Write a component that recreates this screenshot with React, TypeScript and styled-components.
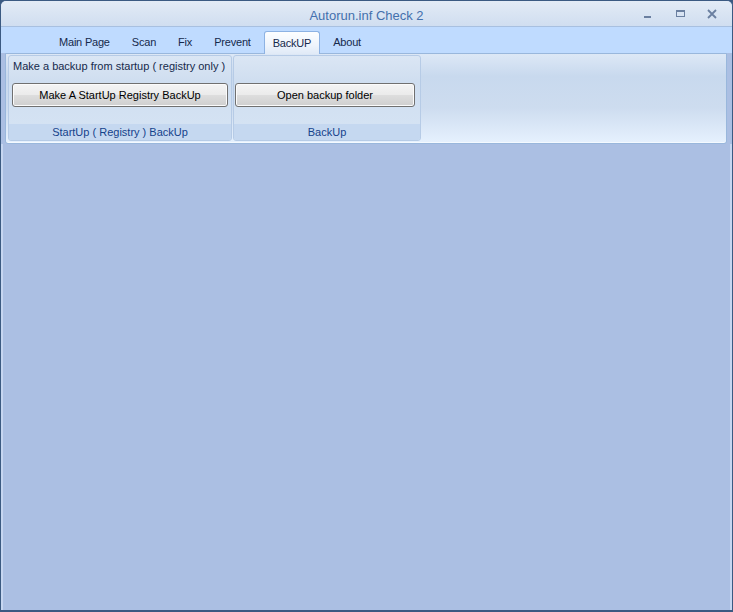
import React from 'react'
import styled, { createGlobalStyle } from 'styled-components'

const GlobalStyle = createGlobalStyle`
  html, body {
    margin: 0;
    padding: 0;
    height: 100%;
    background: #3b5a82;
  }
  #root {
    height: 100%;
  }
`

const uiFont = `'Liberation Sans', 'DejaVu Sans', sans-serif`

const Window = styled.div`
  box-sizing: border-box;
  width: 733px;
  height: 612px;
  display: flex;
  flex-direction: column;
  background: #abbfe3;
  border: 1px solid #3b5a82;
  border-bottom-width: 2px;
  border-radius: 6px 6px 0 0;
  overflow: hidden;
  font-family: ${uiFont};
  font-size: 11px;
`

const TitleBar = styled.div`
  position: relative;
  height: 25px;
  flex: none;
  display: flex;
  align-items: center;
  justify-content: center;
  background: linear-gradient(#e3ebf6 0%, #dae5f3 45%, #d0def0 100%);
  border-bottom: 1px solid #a8c0e0;
`

const Title = styled.span`
  font-size: 13px;
  color: #4470ad;
  margin-top: 3px;
`

const Controls = styled.div`
  position: absolute;
  right: 8px;
  top: 0;
  height: 100%;
  display: flex;
  align-items: center;
  gap: 8px;
`

const ControlButton = styled.div`
  width: 24px;
  height: 18px;
  display: flex;
  align-items: center;
  justify-content: center;
`

const TabStrip = styled.div`
  height: 26px;
  flex: none;
  display: flex;
  align-items: flex-end;
  padding-left: 49px;
  background: #bfdbff;
`

const Tab = styled.div<{ $active?: boolean }>`
  box-sizing: border-box;
  height: 23px;
  padding: 0 8px;
  margin-right: 4px;
  display: flex;
  align-items: center;
  color: #15294b;
  font-size: 11px;
  letter-spacing: -0.2px;
  border: 1px solid ${({ $active }) => ($active ? '#8db2e3' : 'transparent')};
  border-bottom: none;
  border-radius: 3px 3px 0 0;
  background: ${({ $active }) =>
    $active ? 'linear-gradient(#fdfeff 0%, #eef4fc 60%, #e0eaf7 100%)' : 'transparent'};
  margin-bottom: ${({ $active }) => ($active ? '-1px' : '0')};
  position: relative;
  z-index: 1;
`

const Ribbon = styled.div`
  box-sizing: border-box;
  margin: 0 5px 0 4px;
  height: 91px;
  flex: none;
  display: flex;
  gap: 1px;
  padding: 1px 3px 2px 2px;
  border: 1px solid #99b7dc;
  border-radius: 0 0 3px 3px;
  background: linear-gradient(#dde8f6 0%, #c8d9ee 25%, #cddcef 60%, #e6f1fe 100%);
  box-shadow: inset 0 -1px 0 #f4f9ff;
`

const Group = styled.div<{ $width: number }>`
  box-sizing: border-box;
  width: ${({ $width }) => $width}px;
  height: 86px;
  display: flex;
  flex-direction: column;
  border: 1px solid #b6cbe6;
  border-radius: 3px;
  background: linear-gradient(#dbe6f4 0%, #cfdef0 30%, #d6e4f4 100%);
  overflow: hidden;
`

const GroupBody = styled.div<{ $padLeft: number; $padRight: number }>`
  flex: 1;
  display: flex;
  flex-direction: column;
  padding: 2px ${({ $padRight }) => $padRight}px 0 ${({ $padLeft }) => $padLeft}px;
`

const GroupNote = styled.div`
  height: 16px;
  line-height: 16px;
  padding-left: 1px;
  color: #15294b;
  white-space: nowrap;
`

const GroupButton = styled.button<{ $top: number }>`
  box-sizing: border-box;
  margin-top: ${({ $top }) => $top}px;
  width: 100%;
  height: 24px;
  border: 1px solid #707070;
  border-radius: 3px;
  background: linear-gradient(#f4f4f4 0%, #ebebeb 48%, #dddddd 52%, #cfcfcf 100%);
  box-shadow: inset 0 0 0 1px #fbfbfb;
  font-family: ${uiFont};
  font-size: 11px;
  color: #000;
  padding: 0;
`

const Caption = styled.div`
  height: 16px;
  line-height: 16px;
  flex: none;
  text-align: center;
  color: #15428b;
  background: #c5d8f0;
`

const Body = styled.div`
  flex: 1;
  background: #abbfe3;
  border-left: 2px solid #c6d6f1;
  border-right: 2px solid #c6d6f1;
`

const tabs = ['Main Page', 'Scan', 'Fix', 'Prevent', 'BackUP', 'About']

export default function App() {
  return (
    <>
      <GlobalStyle />
      <Window>
        <TitleBar>
          <Title>Autorun.inf Check 2</Title>
          <Controls>
            <ControlButton>
              <svg width="10" height="10" viewBox="0 0 10 10">
                <rect x="1" y="7" width="7" height="2" fill="#6a7fa0" />
              </svg>
            </ControlButton>
            <ControlButton>
              <svg width="11" height="10" viewBox="0 0 11 10">
                <rect x="1.5" y="1.5" width="8" height="6" fill="none" stroke="#6a7fa0" />
                <rect x="1" y="1" width="9" height="2" fill="#6a7fa0" />
              </svg>
            </ControlButton>
            <ControlButton>
              <svg width="10" height="10" viewBox="0 0 10 10">
                <path d="M1 1 L9 9 M9 1 L1 9" stroke="#6a7fa0" strokeWidth="1.8" />
              </svg>
            </ControlButton>
          </Controls>
        </TitleBar>
        <TabStrip>
          {tabs.map((t) => (
            <Tab key={t} $active={t === 'BackUP'}>
              {t}
            </Tab>
          ))}
        </TabStrip>
        <Ribbon>
          <Group $width={224}>
            <GroupBody $padLeft={3} $padRight={3}>
              <GroupNote>Make a backup from startup ( registry only )</GroupNote>
              <GroupButton $top={9}>Make A StartUp Registry BackUp</GroupButton>
            </GroupBody>
            <Caption>StartUp ( Registry ) BackUp</Caption>
          </Group>
          <Group $width={188}>
            <GroupBody $padLeft={1} $padRight={5}>
              <GroupButton $top={25}>Open backup folder</GroupButton>
            </GroupBody>
            <Caption>BackUp</Caption>
          </Group>
        </Ribbon>
        <Body />
      </Window>
    </>
  )
}
